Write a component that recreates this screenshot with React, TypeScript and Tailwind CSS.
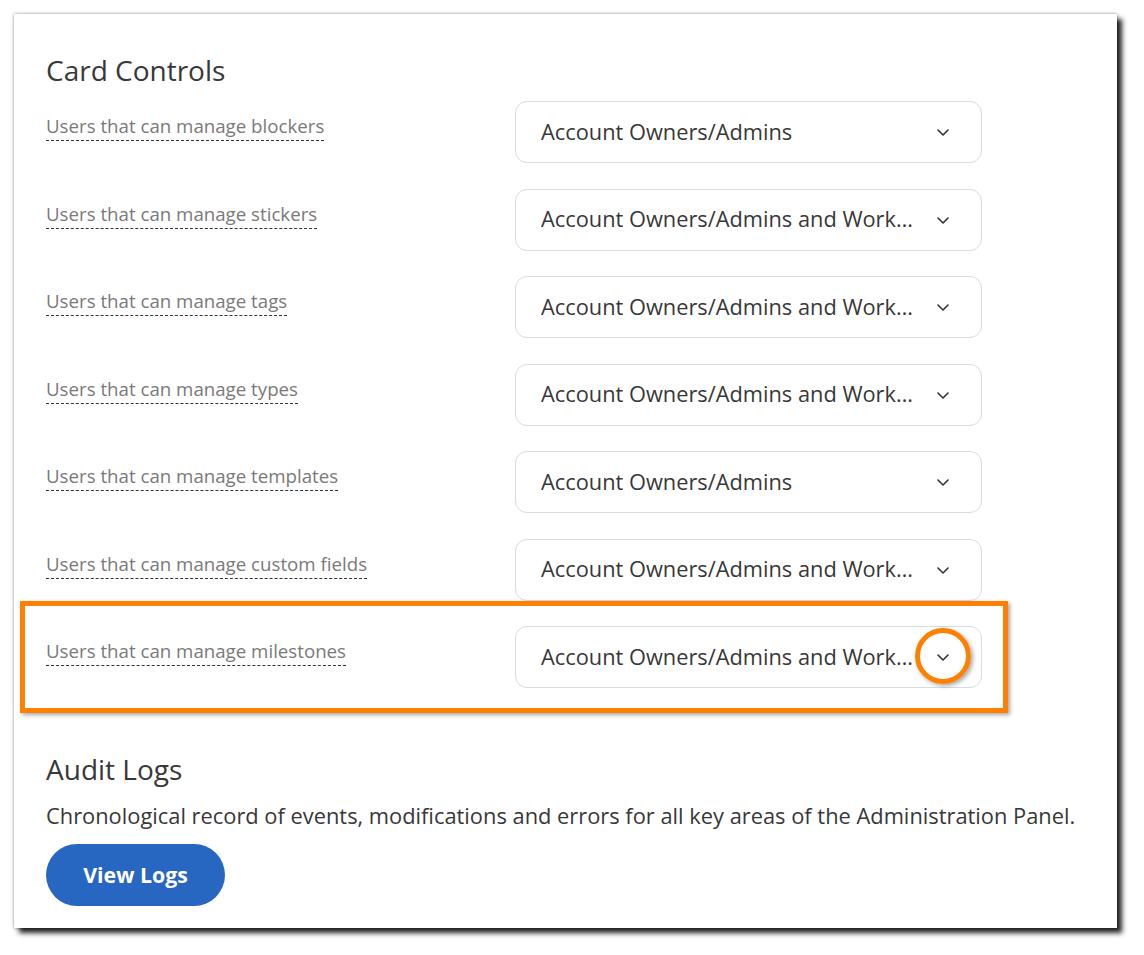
import React from 'react';

interface ControlRow {
  label: string;
  value: string;
  highlight?: boolean;
}

const rows: ControlRow[] = [
  { label: 'Users that can manage blockers', value: 'Account Owners/Admins' },
  { label: 'Users that can manage stickers', value: 'Account Owners/Admins and Workspace Managers' },
  { label: 'Users that can manage tags', value: 'Account Owners/Admins and Workspace Managers' },
  { label: 'Users that can manage types', value: 'Account Owners/Admins and Workspace Managers' },
  { label: 'Users that can manage templates', value: 'Account Owners/Admins' },
  { label: 'Users that can manage custom fields', value: 'Account Owners/Admins and Workspace Managers' },
  { label: 'Users that can manage milestones', value: 'Account Owners/Admins and Workspace Managers', highlight: true },
];

const Chevron = () => (
  <svg width="14" height="14" viewBox="0 0 14 14" fill="none" className="shrink-0">
    <path d="M2 5l5 5 5-5" stroke="#333" strokeWidth="1.6" strokeLinecap="round" strokeLinejoin="round" />
  </svg>
);

const App: React.FC = () => {
  return (
    <div className="w-[1144px] h-[955px] bg-white pt-[14px] pl-[14px]" style={{ fontFamily: '"Open Sans", "Liberation Sans", sans-serif' }}>
      <div className="w-[1103px] h-[914px] bg-white shadow-[0_0_3px_rgba(0,0,0,0.45),5px_5px_5px_rgba(0,0,0,0.85)] pl-[32px] pt-[38px]">
        <h2 className="text-[28px] leading-[36px] text-[#383838] font-normal">Card Controls</h2>

        <div className="flex flex-col gap-[25.5px] mt-[13px]">
          {rows.map((row) => (
            <div key={row.label} className="relative flex items-start">
              <div className="w-[469px] pt-[13px]">
                <span className="text-[18.7px] leading-[24px] text-[#7a7a7a] border-b border-dashed border-[#333] pb-[2px]">
                  {row.label}
                </span>
              </div>
              <div className="w-[467px] h-[62px] rounded-[12px] border border-[#d4dde3] bg-white flex items-center pl-[25px] pr-[31px] gap-[16px]">
                <span className="flex-1 min-w-0 truncate text-[21.8px] text-[#383838]">{row.value}</span>
                <Chevron />
              </div>
              {row.highlight && (
                <>
                  <div className="absolute left-[-26px] top-[-25px] w-[988px] h-[112px] border-[5px] border-[#ff8000] shadow-[2px_2px_4px_rgba(0,0,0,0.35)] pointer-events-none" />
                  <div className="absolute left-[869px] top-[2px] w-[56px] h-[56px] rounded-full border-[5px] border-[#ff8000] shadow-[2px_2px_4px_rgba(0,0,0,0.35)] pointer-events-none" />
                </>
              )}
            </div>
          ))}
        </div>

        <h2 className="mt-[63px] text-[28px] leading-[36px] text-[#383838] font-normal">Audit Logs</h2>
        <p className="mt-[14px] text-[21.85px] leading-[30px] text-[#383838]">
          Chronological record of events, modifications and errors for all key areas of the Administration Panel.
        </p>
        <button className="mt-[13px] w-[179px] h-[62px] rounded-full bg-[#2766c1] text-white text-[21.3px] font-bold">
          View Logs
        </button>
      </div>
    </div>
  );
};

export default App;
